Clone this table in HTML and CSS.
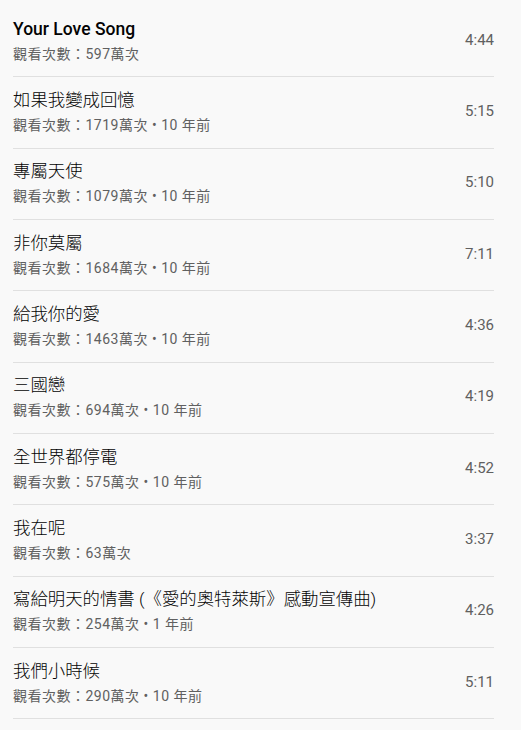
FILE: index.html
```html
<!DOCTYPE html>
<html lang="zh-Hant">
  <head>
    <meta charset="UTF-8" />
    <title>播放清單</title>
    <link rel="stylesheet" href="styles.css">
  </head>
  <body>
    <div class="list">
      <div class="item">
        <div class="info">
          <div class="title title-en">Your Love Song</div>
          <div class="meta">觀看次數：597萬次</div>
        </div>
        <div class="duration">4:44</div>
      </div>
      <div class="item">
        <div class="info">
          <div class="title">如果我變成回憶</div>
          <div class="meta">觀看次數：1719萬次 • 10 年前</div>
        </div>
        <div class="duration">5:15</div>
      </div>
      <div class="item">
        <div class="info">
          <div class="title">專屬天使</div>
          <div class="meta">觀看次數：1079萬次 • 10 年前</div>
        </div>
        <div class="duration">5:10</div>
      </div>
      <div class="item">
        <div class="info">
          <div class="title">非你莫屬</div>
          <div class="meta">觀看次數：1684萬次 • 10 年前</div>
        </div>
        <div class="duration">7:11</div>
      </div>
      <div class="item">
        <div class="info">
          <div class="title">給我你的愛</div>
          <div class="meta">觀看次數：1463萬次 • 10 年前</div>
        </div>
        <div class="duration">4:36</div>
      </div>
      <div class="item">
        <div class="info">
          <div class="title">三國戀</div>
          <div class="meta">觀看次數：694萬次 • 10 年前</div>
        </div>
        <div class="duration">4:19</div>
      </div>
      <div class="item">
        <div class="info">
          <div class="title">全世界都停電</div>
          <div class="meta">觀看次數：575萬次 • 10 年前</div>
        </div>
        <div class="duration">4:52</div>
      </div>
      <div class="item">
        <div class="info">
          <div class="title">我在呢</div>
          <div class="meta">觀看次數：63萬次</div>
        </div>
        <div class="duration">3:37</div>
      </div>
      <div class="item">
        <div class="info">
          <div class="title">寫給明天的情書 (《愛的奧特萊斯》感動宣傳曲)</div>
          <div class="meta">觀看次數：254萬次 • 1 年前</div>
        </div>
        <div class="duration">4:26</div>
      </div>
      <div class="item">
        <div class="info">
          <div class="title">我們小時候</div>
          <div class="meta">觀看次數：290萬次 • 10 年前</div>
        </div>
        <div class="duration">5:11</div>
      </div>
    </div>
  </body>
</html>
```

FILE: styles.css
```css
body {
  margin: 0;
  background-color: #f9f9f9;
  font-family: Roboto, "Noto Sans CJK TC", sans-serif;
}
.list {
  width: 481px;
  margin-left: 13px;
  padding-top: 6px;
}
.item {
  display: flex;
  align-items: center;
  height: 71.33px;
  box-sizing: border-box;
  border-bottom: 1px solid #e0e0e0;
  padding-bottom: 3px;
}
.info {
  flex: 1;
  min-width: 0;
}
.title {
  font-size: 17.4px;
  line-height: 24px;
  font-weight: 300;
  color: #030303;
  white-space: nowrap;
  text-spacing-trim: space-all;
}
.title-en {
  font-size: 17.5px;
  font-weight: 500;
}
.meta {
  margin-top: 4px;
  font-size: 14px;
  line-height: 18px;
  letter-spacing: 0.5px;
  color: #606060;
  text-spacing-trim: space-all;
}
.duration {
  font-size: 15px;
  color: #606060;
}
```
